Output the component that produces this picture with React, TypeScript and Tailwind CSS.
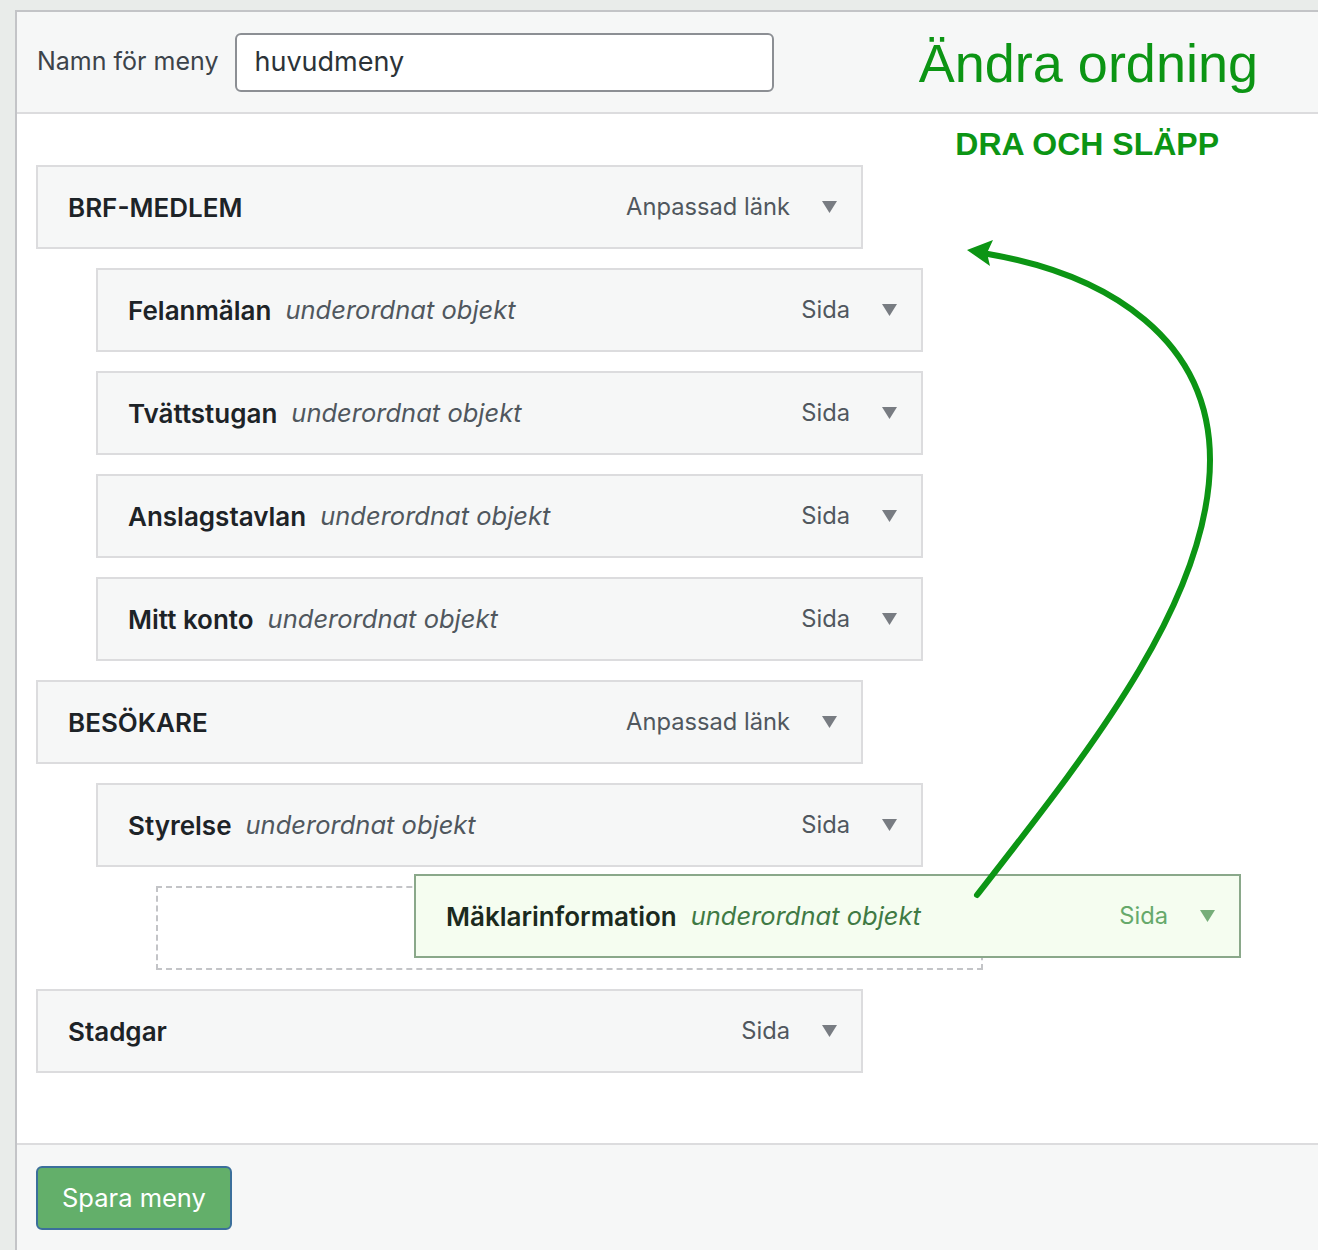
import React from 'react';

type Item = {
  title: string;
  type: string;
  child?: boolean;
};

const items: Item[] = [
  { title: 'BRF-MEDLEM', type: 'Anpassad länk' },
  { title: 'Felanmälan', type: 'Sida', child: true },
  { title: 'Tvättstugan', type: 'Sida', child: true },
  { title: 'Anslagstavlan', type: 'Sida', child: true },
  { title: 'Mitt konto', type: 'Sida', child: true },
  { title: 'BESÖKARE', type: 'Anpassad länk' },
  { title: 'Styrelse', type: 'Sida', child: true },
];

function Caret({ className }: { className: string }) {
  return (
    <svg width="15" height="12" viewBox="0 0 15 12" className={className}>
      <path d="M0 0 L15 0 L7.5 12 Z" fill="currentColor" />
    </svg>
  );
}

function MenuItem({ item }: { item: Item }) {
  return (
    <div
      className={`flex h-[84px] w-[827px] items-center border-2 border-[#dcdcde] bg-[#f6f7f7] pl-[30px] pr-[24px] ${
        item.child ? 'ml-[60px]' : ''
      }`}
    >
      <span className="text-[26px] font-semibold text-[#1d2327]">{item.title}</span>
      {item.child && (
        <span className="ml-[14px] text-[25.5px] italic text-[#50575e]">underordnat objekt</span>
      )}
      <span className="ml-auto text-[23.7px] text-[#50575e]">{item.type}</span>
      <Caret className="ml-[32px] text-[#787c82]" />
    </div>
  );
}

export default function App() {
  return (
    <div className="min-h-[1250px] overflow-hidden bg-[#e9ecea] pl-[15px] pt-[10px] font-['Inter',sans-serif]">
      <div className="relative border-l-2 border-t-2 border-[#c3c4c7] bg-white">
        <div className="flex h-[102px] items-center border-b-2 border-[#dcdcde] bg-[#f6f7f7] pl-[20px]">
          <span className="text-[25px] text-[#3c434a]">Namn för meny</span>
          <div className="ml-[17px] flex h-[59px] w-[539px] items-center rounded-[6px] border-2 border-[#8c8f94] bg-white pl-[17px] text-[27px] text-[#2c3338]">
            huvudmeny
          </div>
          <span className="ml-auto mr-[60px] pt-[2px] font-['Liberation_Sans',Arial,sans-serif] text-[54px] leading-none text-[#0c9514]">
            Ändra ordning
          </span>
        </div>

        <div className="relative flex flex-col gap-[19px] pb-[70px] pl-[19px] pt-[51px]">
          <div className="absolute right-[99px] top-[14px] font-['Liberation_Sans',Arial,sans-serif] text-[32px] font-bold leading-none text-[#0c9514]">
            DRA OCH SLÄPP
          </div>

          {items.map((item) => (
            <MenuItem key={item.title} item={item} />
          ))}

          <div className="relative ml-[120px] h-[84px] w-[827px] border-2 border-dashed border-[#c3c4c7]">
            <div className="absolute left-[256px] top-[-14px] flex h-[84px] w-[827px] items-center border-2 border-[#8aa88a] bg-[#f5fdf0] pl-[30px] pr-[24px]">
              <span className="text-[26px] font-semibold text-[#1b2a1d]">Mäklarinformation</span>
              <span className="ml-[14px] text-[25.5px] italic text-[#3f7a44]">underordnat objekt</span>
              <span className="ml-auto text-[23.7px] text-[#66a96b]">Sida</span>
              <Caret className="ml-[32px] text-[#76ad79]" />
            </div>
          </div>

          <MenuItem item={{ title: 'Stadgar', type: 'Sida' }} />
        </div>

        <div className="h-[120px] border-t-2 border-[#dcdcde] bg-[#f6f7f7] pl-[19px] pt-[21px]">
          <button className="flex h-[64px] items-center rounded-[6px] border-2 border-[#3b6f9b] bg-[#63af6a] px-[24px] text-[25.5px] text-white">
            Spara meny
          </button>
        </div>

        <svg
          className="pointer-events-none absolute left-[-17px] top-[-12px]"
          width="1318"
          height="1250"
          viewBox="0 0 1318 1250"
        >
          <path
            d="M977 895 C1090 750 1210 600 1210 460 C1210 340 1110 275 988 254"
            fill="none"
            stroke="#0c9514"
            strokeWidth="6"
            strokeLinecap="round"
          />
          <path d="M967 250 L993 240 L987 253 L990 266 Z" fill="#0c9514" />
        </svg>
      </div>
    </div>
  );
}
